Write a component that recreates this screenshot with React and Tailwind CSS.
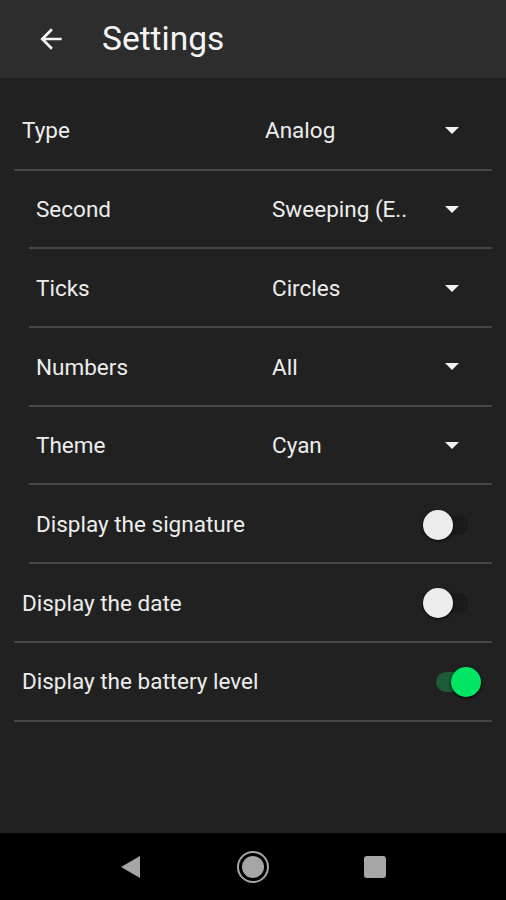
import React from 'react';

const Caret = () => (
  <svg width="14" height="8" viewBox="0 0 14 8" className="mr-[33px]">
    <path d="M0 0 L14 0 L7 7 Z" fill="#f2f2f2" />
  </svg>
);

const Toggle = ({ on }) => (
  <div className="relative w-[34px] h-[30px] mr-[24px] flex items-center">
    <div className={`absolute left-[2px] right-0 h-[20px] rounded-full ${on ? 'bg-[#1d5a38]' : 'bg-[#1a1a1a]'}`} />
    <div
      className={`absolute top-0 w-[30px] h-[30px] rounded-full shadow-[0_1px_3px_rgba(0,0,0,0.9)] ${
        on ? 'left-[17px] bg-[#00e664]' : 'left-[-11px] bg-[#ececec]'
      }`}
    />
  </div>
);

const Row = ({ label, value, toggle, on, nested }) => (
  <div className={`${nested ? 'ml-[29px]' : 'ml-[14px]'} mr-[14px] border-b-2 border-[#474747]`}>
    <div className={`h-[76.7px] flex items-center pt-[2px] ${nested ? 'pl-[7px]' : 'pl-[8px]'}`}>
      <span className="flex-1 text-[22.5px] text-[#ededed]">{label}</span>
      {toggle ? (
        <Toggle on={on} />
      ) : (
        <>
          <span className={`${nested ? 'w-[173px]' : 'w-[180px]'} text-[22.5px] text-[#ededed] whitespace-nowrap`}>{value}</span>
          <Caret />
        </>
      )}
    </div>
  </div>
);

export default function App() {
  return (
    <div className="w-[506px] h-[900px] flex flex-col bg-[#212121]" style={{ fontFamily: 'Roboto, sans-serif' }}>
      <div className="h-[78px] bg-[#2d2d2d] flex items-center shrink-0">
        <svg width="32" height="32" viewBox="0 0 24 24" className="ml-[35px]">
          <path d="M20 11H7.83l5.59-5.59L12 4l-8 8 8 8 1.41-1.41L7.83 13H20v-2z" fill="#f5f5f5" />
        </svg>
        <span className="ml-[35px] text-[33.5px] text-[#f5f5f5]">Settings</span>
      </div>
      <div className="flex-1 pt-[14px]">
        <Row label="Type" value="Analog" />
        <Row nested label="Second" value="Sweeping (E.." />
        <Row nested label="Ticks" value="Circles" />
        <Row nested label="Numbers" value="All" />
        <Row nested label="Theme" value="Cyan" />
        <Row nested label="Display the signature" toggle />
        <Row label="Display the date" toggle />
        <Row label="Display the battery level" toggle on />
      </div>
      <div className="h-[67px] bg-black flex items-center justify-center gap-[94px] shrink-0">
        <svg width="22" height="26" viewBox="0 0 22 26">
          <path d="M20 2 L20 24 L1 13 Z" fill="#a6a6a6" />
        </svg>
        <svg width="34" height="34" viewBox="0 0 34 34">
          <circle cx="17" cy="17" r="15" fill="none" stroke="#a6a6a6" strokeWidth="2" />
          <circle cx="17" cy="17" r="11" fill="#a6a6a6" />
        </svg>
        <div className="w-[22px] h-[22px] rounded-[3px] bg-[#a6a6a6]" />
      </div>
    </div>
  );
}
